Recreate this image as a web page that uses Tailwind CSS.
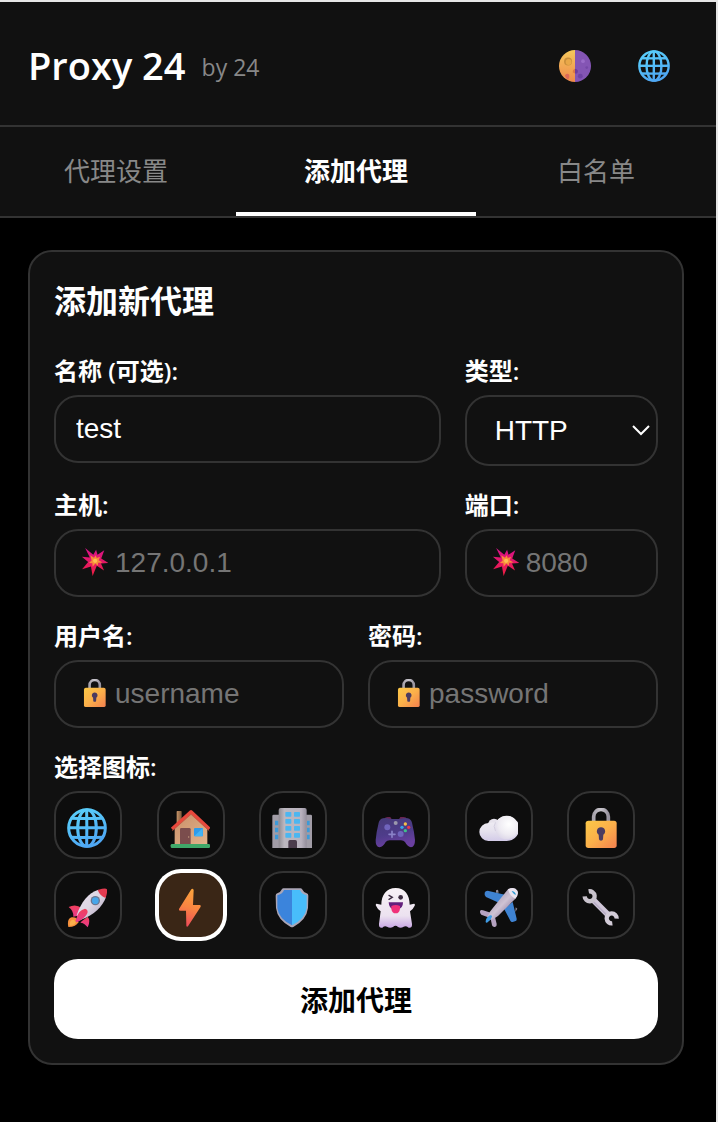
<!DOCTYPE html>
<html lang="zh-CN">
<head>
    <meta charset="UTF-8">
    <meta name="viewport" content="width=device-width, initial-scale=1.0">
    <title>Proxy 24</title>
    <script src="https://cdn.jsdelivr.net/npm/@tailwindcss/browser@4"></script>
</head>
<body class="bg-black overflow-x-hidden text-white font-['Open_Sans','Noto_Sans_CJK_SC',sans-serif]">

<!-- icon sprite -->
<svg class="absolute w-0 h-0" aria-hidden="true" xmlns="http://www.w3.org/2000/svg">
  <defs>
    <linearGradient id="gGlobe" x1="0" y1="0" x2="0.4" y2="1"><stop offset="0" stop-color="#5ad0fb"/><stop offset="0.5" stop-color="#55c0f8"/><stop offset="1" stop-color="#4fa8f4"/></linearGradient>
    <linearGradient id="gMoon" x1="0" y1="0" x2="0" y2="1"><stop offset="0" stop-color="#f6c85c"/><stop offset="1" stop-color="#ee8a4c"/></linearGradient>
    <linearGradient id="gWall" x1="0" y1="0" x2="1" y2="1"><stop offset="0" stop-color="#c98e68"/><stop offset="1" stop-color="#e2b48c"/></linearGradient>
    <linearGradient id="gChimney" x1="0" y1="0" x2="1" y2="0"><stop offset="0" stop-color="#c79468"/><stop offset="1" stop-color="#7d5a3c"/></linearGradient>
    <linearGradient id="gBuild" x1="0" y1="0" x2="1" y2="0"><stop offset="0" stop-color="#8f8b92"/><stop offset="0.2" stop-color="#bcb7bf"/><stop offset="0.8" stop-color="#b9b2be"/><stop offset="1" stop-color="#948e9b"/></linearGradient>
    <linearGradient id="gPad" x1="0" y1="0" x2="0.3" y2="1"><stop offset="0" stop-color="#463a78"/><stop offset="0.6" stop-color="#4e3c8a"/><stop offset="1" stop-color="#6a3fa0"/></linearGradient>
    <linearGradient id="gCloud" x1="0" y1="0" x2="0" y2="1"><stop offset="0" stop-color="#f4f2f6"/><stop offset="0.6" stop-color="#e6e2ee"/><stop offset="1" stop-color="#d3cbe8"/></linearGradient>
    <radialGradient id="gPuff" cx="0.6" cy="0.35" r="0.75"><stop offset="0" stop-color="#ffffff"/><stop offset="0.6" stop-color="#eeebf2"/><stop offset="1" stop-color="#d8d2e6"/></radialGradient>
    <linearGradient id="gLock" x1="0" y1="0" x2="1" y2="1"><stop offset="0" stop-color="#fcc847"/><stop offset="0.5" stop-color="#fbb04a"/><stop offset="1" stop-color="#f3804f"/></linearGradient>
    <linearGradient id="gShackle" x1="0" y1="0" x2="1" y2="0"><stop offset="0" stop-color="#a8a4ad"/><stop offset="0.5" stop-color="#c8c5cc"/><stop offset="1" stop-color="#98939f"/></linearGradient>
    <linearGradient id="gBolt" x1="0.6" y1="0" x2="0.4" y2="1"><stop offset="0" stop-color="#fca43c"/><stop offset="0.5" stop-color="#f98442"/><stop offset="1" stop-color="#ee4a5a"/></linearGradient>
    <linearGradient id="gGhost" x1="0" y1="0" x2="0" y2="1"><stop offset="0" stop-color="#f7f1f5"/><stop offset="0.7" stop-color="#ece2f0"/><stop offset="1" stop-color="#c9a8e4"/></linearGradient>
    <linearGradient id="gBody" x1="0" y1="0" x2="1" y2="1"><stop offset="0" stop-color="#e6dfee"/><stop offset="0.5" stop-color="#ddd6e3"/><stop offset="1" stop-color="#a99cb8"/></linearGradient>
    <linearGradient id="gPlane" x1="0.3" y1="0.3" x2="0.7" y2="0.7"><stop offset="0" stop-color="#b3a6bd"/><stop offset="0.5" stop-color="#cfc3d4"/><stop offset="1" stop-color="#a08fae"/></linearGradient>
    <linearGradient id="gFin" x1="0" y1="0" x2="0" y2="1"><stop offset="0" stop-color="#f0405c"/><stop offset="1" stop-color="#e83a8c"/></linearGradient>
    <linearGradient id="gBoom" x1="0" y1="0" x2="0" y2="1"><stop offset="0" stop-color="#d8128c"/><stop offset="1" stop-color="#f01e40"/></linearGradient>
  </defs>

  <symbol id="globe" viewBox="0 0 120 120">
    <g fill="none" stroke="url(#gGlobe)" stroke-width="9">
      <circle cx="60" cy="60" r="55"/>
      <ellipse cx="60" cy="60" rx="28" ry="55"/>
      <path d="M12 31Q60 32 108 31M5 59Q60 60 115 59M12 88Q60 89 108 88M59 5Q60 60 59 115"/>
    </g>
  </symbol>

  <symbol id="moon" viewBox="0 0 120 120">
    <path d="M60 0A60 60 0 0 0 60 120Z" fill="url(#gMoon)"/>
    <path d="M60 0A60 60 0 0 1 60 120Z" fill="#8455b4"/>
    <circle cx="34" cy="43" r="15" fill="#c98f3c"/><circle cx="36" cy="45" r="11" fill="#e9a848"/>
    <path d="M22 96Q28 84 38 92Q42 104 34 112Q26 108 22 96Z" fill="#dd6a58"/>
    <path d="M60 70Q74 72 70 84Q66 90 60 88Z" fill="#6d3d9c"/><path d="M60 70Q50 74 52 84L60 88Z" fill="#dc7a44"/>
    <circle cx="90" cy="42" r="7" fill="#9a6cc8"/><circle cx="80" cy="98" r="9" fill="#6f43a4"/><circle cx="104" cy="66" r="5" fill="#7448a6"/>
  </symbol>

  <symbol id="house" viewBox="0 0 120 120">
    <rect x="20" y="9" width="15" height="42" rx="2" fill="url(#gChimney)"/>
    <path d="M14 56L63 14L112 56V110H14Z" fill="url(#gWall)"/>
    <path d="M6 63L63 11L118 63" fill="none" stroke="#e8483c" stroke-width="10" stroke-linejoin="round"/>
    <path d="M6 69L63 19L118 69" fill="none" stroke="#b8503c" stroke-width="2"/>
    <path d="M30 64Q30 60 34 60H58Q62 60 62 64V110H30Z" fill="#7b4d4d"/><circle cx="56" cy="87" r="2" fill="#c9a080"/>
    <rect x="72" y="60" width="27" height="25" rx="3" fill="#2e9bea"/><path d="M73 84L98 61V85H75Z" fill="#43b4f4"/>
    <rect x="2" y="108" width="118" height="12" rx="4" fill="#3fa869"/>
  </symbol>

  <symbol id="building" viewBox="0 0 120 120">
    <path d="M1 24Q1 20 5 20H24V120H1ZM96 20H116Q120 20 120 24V120H96Z" fill="#a19ca6"/>
    <path d="M9 38H19V52H9ZM9 59H19V73H9ZM9 80H19V94H9ZM105 38H113V52H105ZM105 59H113V73H105ZM105 80H113V94H105Z" fill="#3d9ad8"/>
    <path d="M20 6Q20 0 26 0H98Q104 0 104 6V120H20Z" fill="url(#gBuild)"/>
    <g fill="#4cb6f0">
      <rect x="40" y="12" width="18" height="14" rx="2"/><rect x="66" y="12" width="18" height="14" rx="2"/>
      <rect x="40" y="33" width="18" height="14" rx="2"/><rect x="66" y="33" width="18" height="14" rx="2"/>
      <rect x="40" y="54" width="18" height="14" rx="2"/><rect x="66" y="54" width="18" height="14" rx="2"/>
      <rect x="40" y="75" width="18" height="14" rx="2"/><rect x="66" y="75" width="18" height="14" rx="2"/>
    </g>
    <path d="M49 101Q49 96 54 96H70Q75 96 75 101V120H49Z" fill="#4b3c4c"/>
  </symbol>

  <symbol id="gamepad" viewBox="0 0 120 120">
    <path d="M28 34Q30 27 38 27H46L50 34ZM72 34L76 27H86Q94 27 96 34Z" fill="#6a2450"/>
    <path d="M24 31Q34 29 44 32Q60 34 78 32Q88 29 98 31Q108 33 111 44Q118 72 120 96Q120 117 108 118Q98 117 90 102Q86 97 78 97H44Q36 97 32 102Q24 117 14 118Q1 117 2 96Q4 72 11 44Q14 33 24 31Z" fill="url(#gPad)"/>
    <circle cx="37" cy="58" r="9" fill="#7064bc"/><circle cx="77" cy="78" r="9" fill="#7064bc"/>
    <path d="M51 70V88M42 79H60" stroke="#8a82c8" stroke-width="5" stroke-linecap="round"/>
    <circle cx="62" cy="45" r="6" fill="#9b98ac"/>
    <circle cx="91" cy="48" r="5" fill="#f5bf4a"/><circle cx="101" cy="58" r="5" fill="#e8364c"/><circle cx="81" cy="58" r="5" fill="#38a4e8"/><circle cx="91" cy="68" r="5" fill="#3fc08a"/>
  </symbol>

  <symbol id="cloud" viewBox="0 0 120 120">
    <circle cx="48" cy="50" r="18" fill="#e6e2ec"/>
    <path d="M31 45A27 27 0 0 0 31 99H86A38 38 0 1 0 52 44Q42 42 31 45Z" fill="url(#gCloud)"/>
    <circle cx="86" cy="59" r="35" fill="url(#gPuff)"/>
    <path d="M52 44Q44 54 52 68" fill="none" stroke="#d4cfe0" stroke-width="3" stroke-linecap="round"/>
  </symbol>

  <symbol id="lock" viewBox="0 0 120 120">
    <path d="M41 44V26A22 22 0 0 1 85 26V44" fill="none" stroke="url(#gShackle)" stroke-width="11"/>
    <rect x="17" y="38" width="93" height="82" rx="8" fill="url(#gLock)"/>
    <path d="M63 58A12 12 0 0 1 70 80L69 94Q68 98 63 98Q58 98 57 94L56 80A12 12 0 0 1 63 58Z" fill="#4b3b60"/>
  </symbol>

  <symbol id="rocket" viewBox="0 0 120 120">
    <path d="M4 117Q-1 92 14 88Q32 86 34 103Q28 117 4 117Z" fill="#f58f3c"/><path d="M9 113Q6 98 17 95Q26 96 26 104Q22 112 9 113Z" fill="#fab04c"/>
    <path d="M5 57Q26 46 44 60L30 84L19 86Q20 68 5 57Z" fill="url(#gFin)"/>
    <path d="M44 100L62 86Q72 98 62 118Q52 104 40 104Z" fill="url(#gFin)"/>
    <path d="M94 5C64 14 42 42 29 82L42 95C82 82 106 56 117 28Z" fill="url(#gBody)"/>
    <path d="M92 6Q116 -1 119 3Q123 8 116 30Q99 24 92 6Z" fill="#e33a50"/>
    <path d="M28 92Q34 66 54 62Q66 66 60 78Q52 92 32 102Q22 102 28 92Z" fill="url(#gFin)"/>
    <circle cx="85" cy="38" r="14" fill="#6c7690"/><circle cx="85" cy="38" r="10" fill="#48a6ea"/>
  </symbol>

  <symbol id="bolt" viewBox="0 0 120 120">
    <path d="M64 4L27 63Q25 68 31 68H48L49 113Q50 118 54 115L92 56Q94 51 89 51H69L71 6Q68 0 64 4Z" fill="url(#gBolt)"/>
  </symbol>

  <symbol id="shield" viewBox="0 0 120 120">
    <path d="M34 1H86Q90 1 92 6Q96 15 104 16Q109 17 109 23L108 60Q104 95 64 117Q60 119 56 117Q16 95 12 60L11 23Q11 17 16 16Q24 15 28 6Q30 1 34 1Z" fill="#aaa5b6"/>
    <path d="M60 6H36Q31 19 16 22V60Q20 92 60 112Z" fill="#3b84dc"/>
    <path d="M60 6H84Q89 19 104 22V60Q100 92 60 112Z" fill="#48bdfb"/>
  </symbol>

  <symbol id="ghost" viewBox="0 0 120 120">
    <path d="M62 0C90 0 104 22 104 50L117 47Q121 48 119 53Q114 64 105 70L111 108Q112 121 101 119Q93 113 86 116Q77 122 69 117Q62 110 54 117Q45 122 36 116Q29 113 22 119Q11 121 12 108L17 70Q8 64 3 53Q1 48 5 47L19 50C19 22 34 0 62 0Z" fill="url(#gGhost)"/>
    <path d="M42 22L52 28L42 34" fill="none" stroke="#3c2c40" stroke-width="4" stroke-linecap="round"/>
    <circle cx="77" cy="28" r="7" fill="#3c2c40"/>
    <path d="M41 43H84Q84 60 70 64H54Q42 60 41 43Z" fill="#64207c"/>
    <path d="M49 54Q62 48 75 54V62Q73 76 62 76Q51 76 49 62Z" fill="#f0307a"/>
  </symbol>

  <symbol id="plane" viewBox="0 0 120 120">
    <path d="M54 7L60 5L62 14L54 14ZM113 58L118 62L112 72Z" fill="#8d8896"/>
    <path d="M20 14Q22 8 29 8L84 21L66 46L24 27Q18 21 20 14Z" fill="#3f83d2"/>
    <path d="M104 42L116 92Q117 99 111 100L104 102Q99 103 97 98L78 62Z" fill="#3f83d2"/>
    <path d="M6 70Q8 64 15 67L38 74L30 88L10 80Q5 76 6 70Z" fill="#b5a2c0"/>
    <path d="M38 92L50 84L56 108Q57 115 51 117Q44 118 42 112Z" fill="#b5a2c0"/>
    <path d="M90 4Q110 -5 118 8Q123 19 112 32L60 84Q48 94 36 95Q28 93 30 83Q33 73 44 61Z" fill="url(#gPlane)"/>
    <path d="M90 4Q110 -5 118 8Q123 19 112 32Q96 26 90 4Z" fill="#e9e3ee"/>
    <path d="M23 100Q24 88 36 82Q43 80 42 86Q38 98 27 104Q22 105 23 100Z" fill="#3f9be4"/>
    <path d="M101 9Q110 9 114 20Q107 20 101 9Z" fill="#2c9ad2"/>
  </symbol>

  <symbol id="wrench" viewBox="0 0 120 120">
    <path d="M38 34L86 82" stroke="#cfc6d8" stroke-width="18"/>
    <path d="M42 43L78 79" stroke="#b9aec6" stroke-width="5" stroke-linecap="round"/>
    <path d="M26 10A15 15 0 1 1 14 25" fill="none" stroke="#c9c3cd" stroke-width="13"/>
    <path d="M97 106A15 15 0 1 1 110 92" fill="none" stroke="#d3ccd8" stroke-width="13"/>
  </symbol>

  <symbol id="boom" viewBox="0 0 120 120">
    <path d="M22 0L57 29L69 8L75 29L104 10L91 45L121 64L90 66L103 96L72 76L54 120L47 79L9 91L35 60L8 37L42 41Z" fill="url(#gBoom)"/>
    <path d="M44 31L60 42L67 31L72 43L86 37L80 52L96 62L78 63L76 76L66 66L54 80L53 65L38 64L50 54Z" fill="#f98a3c"/>
    <circle cx="65" cy="55" r="9" fill="#fcc050"/>
  </symbol>
</svg>

<div class="-ml-1 min-h-screen border-t-2 border-r-2 border-[#e6e6e6]">

  <header class="flex items-center justify-between bg-[#111] border-b-2 border-[#333] px-8 pt-9 pb-8">
    <div class="flex items-center gap-4">
      <h1 class="text-[38px] leading-[55px] font-semibold">Proxy 24</h1>
      <span class="pt-1 text-[23px] text-[#888]">by 24</span>
    </div>
    <div class="flex gap-[47px] pr-3.5">
      <button type="button" aria-label="切换主题"><svg class="size-8"><use href="#moon"/></svg></button>
      <button type="button" aria-label="切换语言"><svg class="size-8"><use href="#globe"/></svg></button>
    </div>
  </header>

  <nav class="grid grid-cols-3 bg-[#111] border-b-2 border-[#333] text-[26px] leading-[39px] text-center text-[#888]">
    <a href="#settings" class="pt-[25px] pb-[21px] border-b-4 border-transparent">代理设置</a>
    <a href="#add" class="pt-[25px] pb-[21px] border-b-4 border-white font-bold text-white" aria-current="page">添加代理</a>
    <a href="#whitelist" class="pt-[25px] pb-[21px] border-b-4 border-transparent">白名单</a>
  </nav>

  <main class="p-8">
    <form class="bg-[#111] border-2 border-[#333] rounded-3xl p-6">
      <h2 class="text-[32px] leading-[50px] font-semibold mb-[30px]">添加新代理</h2>

      <div class="grid grid-cols-[2fr_1fr] gap-6 mb-6">
        <div>
          <label for="name" class="block mb-2.5 text-2xl leading-[29px] font-semibold">名称 (可选):</label>
          <input id="name" type="text" value="test" class="block w-full h-[68px] px-5 rounded-3xl border-2 border-[#333] bg-[#111] text-[28px] font-['Liberation_Sans',sans-serif]">
        </div>
        <div>
          <label for="type" class="block mb-2.5 text-2xl leading-[29px] font-semibold">类型:</label>
          <div class="relative">
            <select id="type" class="block w-full h-[71px] pl-7 pr-10 appearance-none rounded-3xl border-2 border-[#333] bg-[#111] text-[28px] font-['Liberation_Sans',sans-serif]">
              <option>HTTP</option>
              <option>HTTPS</option>
              <option>SOCKS5</option>
            </select>
            <svg class="absolute right-2 top-[29px] w-[18px] h-3 pointer-events-none" viewBox="0 0 18 12" fill="none" stroke="#fff" stroke-width="2" aria-hidden="true"><path d="M1 2L9 10L17 2"/></svg>
          </div>
        </div>
      </div>

      <div class="grid grid-cols-[2fr_1fr] gap-6 mb-6">
        <div>
          <label for="host" class="block mb-2.5 text-2xl leading-[29px] font-semibold">主机:</label>
          <div class="relative">
            <input id="host" type="text" placeholder="127.0.0.1" class="block w-full h-[68px] pl-[59px] pr-5 rounded-3xl border-2 border-[#333] bg-[#111] text-[28px] placeholder:text-[#757575] font-['Liberation_Sans',sans-serif]">
            <svg class="absolute left-[26px] top-[19px] size-7 pointer-events-none" aria-hidden="true"><use href="#boom"/></svg>
          </div>
        </div>
        <div>
          <label for="port" class="block mb-2.5 text-2xl leading-[29px] font-semibold">端口:</label>
          <div class="relative">
            <input id="port" type="text" placeholder="8080" class="block w-full h-[68px] pl-[59px] pr-5 rounded-3xl border-2 border-[#333] bg-[#111] text-[28px] placeholder:text-[#757575] font-['Liberation_Sans',sans-serif]">
            <svg class="absolute left-[26px] top-[19px] size-7 pointer-events-none" aria-hidden="true"><use href="#boom"/></svg>
          </div>
        </div>
      </div>

      <div class="grid grid-cols-2 gap-6 mb-6">
        <div>
          <label for="username" class="block mb-2.5 text-2xl leading-[29px] font-semibold">用户名:</label>
          <div class="relative">
            <input id="username" type="text" placeholder="username" class="block w-full h-[68px] pl-[59px] pr-5 rounded-3xl border-2 border-[#333] bg-[#111] text-[28px] placeholder:text-[#757575] font-['Liberation_Sans',sans-serif]">
            <svg class="absolute left-[26px] top-[19px] size-7 pointer-events-none" aria-hidden="true"><use href="#lock"/></svg>
          </div>
        </div>
        <div>
          <label for="password" class="block mb-2.5 text-2xl leading-[29px] font-semibold">密码:</label>
          <div class="relative">
            <input id="password" type="password" placeholder="password" class="block w-full h-[68px] pl-[59px] pr-5 rounded-3xl border-2 border-[#333] bg-[#111] text-[28px] placeholder:text-[#757575] font-['Liberation_Sans',sans-serif]">
            <svg class="absolute left-[26px] top-[19px] size-7 pointer-events-none" aria-hidden="true"><use href="#lock"/></svg>
          </div>
        </div>
      </div>

      <p id="iconLabel" class="mb-2.5 text-2xl leading-[29px] font-semibold">选择图标:</p>
      <div class="grid grid-cols-6 gap-3 mb-5" role="group" aria-labelledby="iconLabel">
        <button type="button" aria-label="地球" class="flex items-center justify-center size-[68px] pt-1.5 pr-0.5 rounded-3xl border-2 border-[#333] bg-[#0d0d0d]"><svg class="size-10"><use href="#globe"/></svg></button>
        <button type="button" aria-label="房子" class="flex items-center justify-center size-[68px] pt-1.5 pr-0.5 rounded-3xl border-2 border-[#333] bg-[#0d0d0d]"><svg class="size-10"><use href="#house"/></svg></button>
        <button type="button" aria-label="办公楼" class="flex items-center justify-center size-[68px] pt-1.5 pr-0.5 rounded-3xl border-2 border-[#333] bg-[#0d0d0d]"><svg class="size-10"><use href="#building"/></svg></button>
        <button type="button" aria-label="游戏" class="flex items-center justify-center size-[68px] pt-1.5 pr-0.5 rounded-3xl border-2 border-[#333] bg-[#0d0d0d]"><svg class="size-10"><use href="#gamepad"/></svg></button>
        <button type="button" aria-label="云" class="flex items-center justify-center size-[68px] pt-1.5 pr-0.5 rounded-3xl border-2 border-[#333] bg-[#0d0d0d]"><svg class="size-10"><use href="#cloud"/></svg></button>
        <button type="button" aria-label="锁" class="flex items-center justify-center size-[68px] pt-1.5 pr-0.5 rounded-3xl border-2 border-[#333] bg-[#0d0d0d]"><svg class="size-10"><use href="#lock"/></svg></button>
        <button type="button" aria-label="火箭" class="flex items-center justify-center size-[68px] pt-1.5 pr-0.5 rounded-3xl border-2 border-[#333] bg-[#0d0d0d]"><svg class="size-10"><use href="#rocket"/></svg></button>
        <button type="button" aria-label="闪电" aria-pressed="true" class="flex items-center justify-center size-[68px] pt-1.5 pr-0.5 rounded-3xl border-2 border-white ring-2 ring-white bg-[#3a2616]"><svg class="size-10"><use href="#bolt"/></svg></button>
        <button type="button" aria-label="盾牌" class="flex items-center justify-center size-[68px] pt-1.5 pr-0.5 rounded-3xl border-2 border-[#333] bg-[#0d0d0d]"><svg class="size-10"><use href="#shield"/></svg></button>
        <button type="button" aria-label="幽灵" class="flex items-center justify-center size-[68px] pt-1.5 pr-0.5 rounded-3xl border-2 border-[#333] bg-[#0d0d0d]"><svg class="size-10"><use href="#ghost"/></svg></button>
        <button type="button" aria-label="飞机" class="flex items-center justify-center size-[68px] pt-1.5 pr-0.5 rounded-3xl border-2 border-[#333] bg-[#0d0d0d]"><svg class="size-10"><use href="#plane"/></svg></button>
        <button type="button" aria-label="扳手" class="flex items-center justify-center size-[68px] pt-1.5 pr-0.5 rounded-3xl border-2 border-[#333] bg-[#0d0d0d]"><svg class="size-10"><use href="#wrench"/></svg></button>
      </div>

      <button type="submit" class="block w-full pt-[21px] pb-[19px] rounded-3xl bg-white text-black text-[28px] leading-10 font-bold">添加代理</button>
    </form>
  </main>

</div>

<script>
  // 选择图标
  const iconButtons = document.querySelectorAll('[role="group"] button');

  iconButtons.forEach(button => {
    button.addEventListener('click', () => {
      iconButtons.forEach(b => {
        b.classList.remove('border-white', 'ring-2', 'ring-white', 'bg-[#3a2616]');
        b.classList.add('border-[#333]', 'bg-[#0d0d0d]');
        b.removeAttribute('aria-pressed');
      });
      button.classList.remove('border-[#333]', 'bg-[#0d0d0d]');
      button.classList.add('border-white', 'ring-2', 'ring-white', 'bg-[#3a2616]');
      button.setAttribute('aria-pressed', 'true');
    });
  });
</script>
</body>
</html>
